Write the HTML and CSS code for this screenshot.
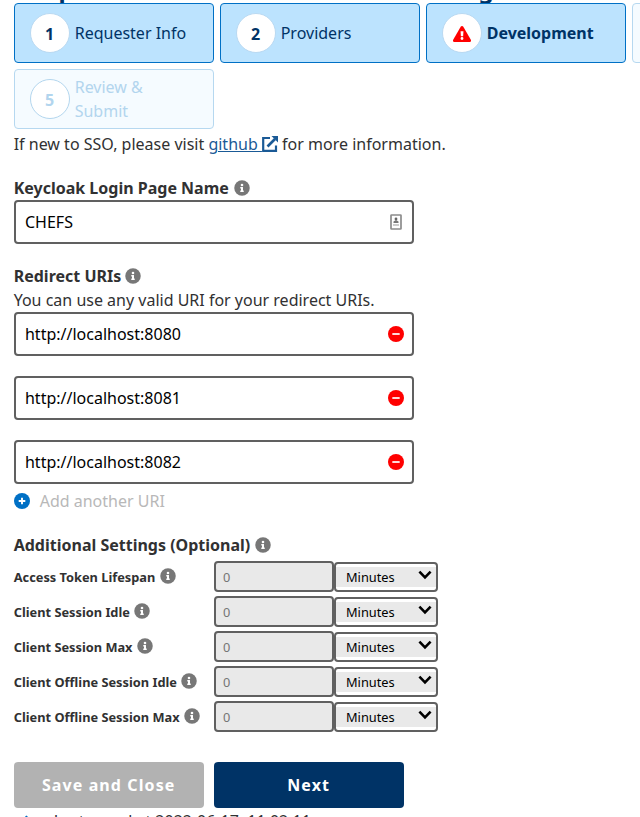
FILE: index.html
```html
<!DOCTYPE html>
<html lang="en">
<head>
<meta charset="utf-8">
<title>Request form</title>
<link rel="stylesheet" href="styles.css">
</head>
<body>
<svg class="defs" aria-hidden="true">
  <symbol id="info" viewBox="0 0 512 512"><path fill="#777" d="M256 8a248 248 0 1 0 0 496a248 248 0 1 0 0-496z"/><path fill="#fff" d="M256 118a42 42 0 1 1 0 84a42 42 0 1 1 0-84zM312 372c0 7-5 12-12 12h-88c-7 0-12-5-12-12v-24c0-7 5-12 12-12h12v-64h-12c-7 0-12-5-12-12v-24c0-7 5-12 12-12h64c7 0 12 5 12 12v100h12c7 0 12 5 12 12z"/></symbol>
  <symbol id="minus" viewBox="0 0 16 16"><circle cx="8" cy="8" r="8" fill="#f00"/><rect x="4.3" y="6.9" width="7.4" height="2.2" rx=".4" fill="#fff" opacity=".85"/></symbol>
  <symbol id="chev" viewBox="0 0 14 10"><path d="M1.400 1.600L7 7.300L12.600 1.600" fill="none" stroke="#000" stroke-width="2.600"/></symbol>
</svg>
<main class="page">
  <h1 class="title"><span>Complete</span><span>Integration</span></h1>
  <nav class="steps">
    <div class="step done"><span class="circle">1</span><span>Requester Info</span></div>
    <div class="step done"><span class="circle">2</span><span>Providers</span></div>
    <div class="step done current"><span class="circle"><svg width="18" height="16" viewBox="0 0 576 512"><path fill="#f00" d="M570 440c18 32-5 72-42 72H48c-37 0-60-40-42-72L246 24c19-32 65-32 84 0z"/><path fill="#fff" d="M242 166h92l-10 160h-72zM288 354a46 46 0 1 1 0 92a46 46 0 1 1 0-92z"/></svg></span><span>Development</span></div>
    <div class="step todo"></div>
    <div class="step todo"><span class="circle">5</span><span>Review &amp;<br>Submit</span></div>
  </nav>
  <p class="intro">If new to SSO, please visit <a href="#">github <svg width="16" height="16" viewBox="0 0 16 16"><path d="M8 2H1.200V14.800H14V9.500" fill="none" stroke="currentColor" stroke-width="2.200"/><path d="M5.500 10.500L13 3" stroke="currentColor" stroke-width="2.600"/><path d="M9.500 0H16V6.500z" fill="currentColor"/></svg></a> for more information.</p>

  <h2 class="label name">Keycloak Login Page Name <svg class="info"><use href="#info"/></svg></h2>
  <div class="field"><span>CHEFS</span><svg class="card" width="12" height="16" viewBox="0 0 12 16"><rect x="1" y="1" width="10" height="14" rx=".5" fill="#fff" stroke="#8c8c8c" stroke-width="1.700"/><circle cx="6" cy="5" r="1.400" fill="#666"/><path d="M3.500 9V7.500L6 6L8.500 7.500V9z" fill="#777"/><path d="M3 11H9" stroke="#999"/></svg></div>

  <h2 class="label uris">Redirect URIs <svg class="info"><use href="#info"/></svg></h2>
  <p class="hint">You can use any valid URI for your redirect URIs.</p>
  <div class="uri-list">
    <div class="field"><span>http://localhost:8080</span><svg class="remove"><use href="#minus"/></svg></div>
    <div class="field"><span>http://localhost:8081</span><svg class="remove"><use href="#minus"/></svg></div>
    <div class="field"><span>http://localhost:8082</span><svg class="remove"><use href="#minus"/></svg></div>
  </div>
  <div class="add"><svg width="16" height="16" viewBox="0 0 16 16"><circle cx="8" cy="8" r="8" fill="#0070c5"/><path d="M4.700 8H11.300M8 4.700V11.300" stroke="#fff" stroke-width="1.900"/></svg><span>Add another URI</span></div>

  <h2 class="label extra">Additional Settings (Optional) <svg class="info"><use href="#info"/></svg></h2>
  <div class="settings">
    <div class="row"><span class="setting">Access Token Lifespan<svg class="info"><use href="#info"/></svg></span><span class="number">0</span><span class="unit"><span class="unit-in">Minutes<svg class="chev"><use href="#chev"/></svg></span></span></div>
    <div class="row"><span class="setting">Client Session Idle<svg class="info"><use href="#info"/></svg></span><span class="number">0</span><span class="unit"><span class="unit-in">Minutes<svg class="chev"><use href="#chev"/></svg></span></span></div>
    <div class="row"><span class="setting">Client Session Max<svg class="info"><use href="#info"/></svg></span><span class="number">0</span><span class="unit"><span class="unit-in">Minutes<svg class="chev"><use href="#chev"/></svg></span></span></div>
    <div class="row"><span class="setting">Client Offline Session Idle<svg class="info"><use href="#info"/></svg></span><span class="number">0</span><span class="unit"><span class="unit-in">Minutes<svg class="chev"><use href="#chev"/></svg></span></span></div>
    <div class="row"><span class="setting">Client Offline Session Max<svg class="info"><use href="#info"/></svg></span><span class="number">0</span><span class="unit"><span class="unit-in">Minutes<svg class="chev"><use href="#chev"/></svg></span></span></div>
  </div>
  <div class="buttons"><button class="btn save">Save and Close</button><button class="btn next">Next</button></div>
  <p class="saved"><svg width="12" height="12" viewBox="0 0 12 12"><path d="M1 7L4 10L11 1" fill="none" stroke="#0070c5" stroke-width="2"/></svg><span>Last saved at 2022-06-17, 11:02:11</span></p>
</main>
</body>
</html>
```
FILE: styles.css
```css
* { box-sizing: border-box; }
html, body { margin: 0; height: 817px; overflow: hidden; }
body { font: 16px/24px "Noto Sans", sans-serif; color: #313132; background: #fff; }
h1, h2, p { margin: 0; }
.defs { display: none; }
.page { width: 100%; height: 817px; padding-left: 13.7px; overflow: hidden; }
.title { display: flex; gap: 309px; height: 36px; margin: -33px 0 0 -9px; font-size: 24px; line-height: 44px; color: #036; }
.steps { position: relative; display: grid; grid-template-columns: repeat(4, 200px); gap: 6px; }
.step { display: flex; align-items: center; height: 60px; padding-left: 15px; border: 1px solid #0070c5; border-radius: 4px; color: #036; background: #bce3fe; }
.circle { display: flex; flex: none; align-items: center; justify-content: center; width: 40px; height: 40px; margin-right: 5px; border: 1px solid #b9d9f2; border-radius: 50%; background: #fff; font-weight: 700; padding-top: 1px; }
.current { font-weight: 700; }
.todo { border-color: #b6d8f0; background: #f5fbff; color: #b2d5ee; }
.todo .circle { border-color: #b3d6ee; }
.intro { margin-top: 3px; }
.intro a { color: #1a5a96; }
.intro svg { vertical-align: -2px; }
.info { width: 16px; height: 16px; vertical-align: -2px; }
.label { font-size: 16px; line-height: 24px; font-weight: 700; }
.name { margin-top: 20px; }
.name .info { margin-left: .9px; }
.field { display: flex; align-items: center; justify-content: space-between; width: 400px; height: 44px; padding: 0 8px 0 9.3px; border: 2px solid #606060; border-radius: 4px; color: #000; }
.card { margin-right: 2px; }
.uris { margin-top: 20px; }
.uris .info { margin-left: -.5px; }
.uri-list { display: grid; gap: 20px; }
.remove { width: 16px; height: 16px; }
.add { display: flex; align-items: center; gap: 10px; height: 24px; margin-top: 5px; color: #b8b8b8; }
.extra { margin-top: 20px; }
.extra .info { margin-left: .5px; }
.settings { display: grid; gap: 4px; margin-top: 4px; }
.row { display: flex; height: 31px; }
.setting { width: 200px; font-size: 12.8px; font-weight: 700; line-height: 33px; white-space: nowrap; }
.setting .info { margin-left: 4.2px; vertical-align: -2px; }
.number { width: 120px; height: 31px; padding-left: 7.3px; border: 2px solid #606060; border-radius: 4px; background: #e9e9e9; color: #757575; font-size: 12.8px; line-height: 29px; }
.unit { width: 104px; height: 30px; margin-top: 1px; padding: 3px 0; border: 2px solid #606060; border-radius: 4px; color: #000; }
.unit-in { display: flex; justify-content: space-between; height: 20px; padding: 0 4px 0 10.3px; background: #e9e9e9; font-size: 12.8px; line-height: 20px; }
.chev { width: 14px; height: 10px; margin-top: 3px; }
.buttons { display: flex; gap: 10px; margin-top: 30px; }
.btn { width: 190px; height: 46px; padding: 0; border: 0; border-radius: 4px; color: #fff; font: 700 16px/24px "Noto Sans", sans-serif; letter-spacing: 1.1px; }
.save { background: #b2b2b2; }
.next { background: #036; }
.saved { display: flex; align-items: center; gap: 26px; height: 24px; margin-top: 1px; padding-left: 2px; white-space: nowrap; }
```
